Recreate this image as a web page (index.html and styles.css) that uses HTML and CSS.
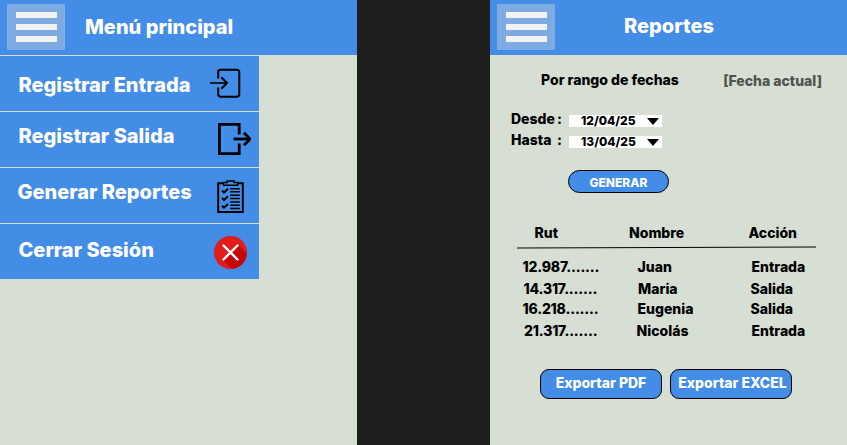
FILE: index.html
```html
<!DOCTYPE html>
<html lang="es">
<head>
<meta charset="utf-8">
<title>Control de accesos</title>
<link rel="stylesheet" href="styles.css">
</head>
<body>
<main class="board">
  <section class="screen">
    <header class="topbar">
      <button class="burger" aria-label="Menú"><span></span><span></span><span></span></button>
      <h1 class="title title-menu">Menú principal</h1>
    </header>
    <nav class="menu">
      <a class="item entrada"><span>Registrar Entrada</span>
        <svg width="32" height="32" viewBox="0 0 32 32" fill="none" stroke="#000" stroke-width="2"><path d="M8.200 10.500V4a2.300 2.300 0 0 1 2.300-2.300H27A2.300 2.300 0 0 1 29.300 4v22.400A2.300 2.300 0 0 1 27 28.700H10.500A2.300 2.300 0 0 1 8.200 26.400V19.500"/><path d="M0 15h17" stroke-width="1.600"/><path d="M11.300 9.300L17 15l-5.700 5.700"/></svg>
      </a>
      <a class="item salida"><span>Registrar Salida</span>
        <svg width="34" height="34" viewBox="0 0 34 34" fill="none" stroke="#000" stroke-width="2.800"><path d="M22.200 12.500V2.400H2.400v29.200h19.800V21.500"/><path d="M16.500 17H33"/><path d="M27 10.800L33 17l-6 6.200"/></svg>
      </a>
      <a class="item reportes"><span>Generar Reportes</span>
        <svg width="27" height="34" viewBox="0 0 27 34" fill="none" stroke="#000" stroke-width="2"><path d="M6.500 3.200H1.200v28.900h24.600V3.200h-5.300"/><path d="M6.500 5.300V2.500h3.700V1h6.800v1.500h3.700v2.800z" stroke-width="1.400"/><path d="M13.200 8.700h9.600M13.200 11.800h9.600M13.200 15.300h9.600M13.200 18.500h9.600M13.200 22h9.600M13.200 25.200h9.600M13.200 28.400h9.600" stroke-width="1.500"/><path d="M5 10.500l2 2 4-3.800M5 18l2 2 4-3.800M5 25.700l2 2 4-3.800"/></svg>
      </a>
      <a class="item sesion"><span>Cerrar Sesión</span>
        <svg width="34" height="34" viewBox="0 0 34 34"><defs><clipPath id="disc"><circle cx="17.500" cy="17.500" r="16.500"/></clipPath></defs><circle cx="17.500" cy="17.500" r="16.500" fill="#e21b1b"/><path d="M24.500 9.500L38 23 24 39 9.500 24.500z" fill="#c40808" clip-path="url(#disc)"/><path d="M10.500 10.500l14 14M24.500 10.500L10.500 24.500" stroke="#fff" stroke-width="2.400" stroke-linecap="round"/></svg>
      </a>
    </nav>
  </section>
  <section class="screen">
    <header class="topbar">
      <button class="burger" aria-label="Menú"><span></span><span></span><span></span></button>
      <h1 class="title title-reports">Reportes</h1>
    </header>
    <div class="heading"><h2>Por rango de fechas</h2><span class="today">[Fecha actual]</span></div>
    <div class="filters">
      <div class="filter"><span class="label">Desde</span><span class="colon">:</span><span class="date"><span>12/04/25</span><svg width="12" height="7" viewBox="0 0 12 7"><path d="M0 0h12L6 7z"/></svg></span></div>
      <div class="filter"><span class="label">Hasta</span><span class="colon">:</span><span class="date"><span>13/04/25</span><svg width="12" height="7" viewBox="0 0 12 7"><path d="M0 0h12L6 7z"/></svg></span></div>
    </div>
    <button class="generate">GENERAR</button>
    <div class="row head"><span>Rut</span><span>Nombre</span><span>Acción</span></div>
    <svg class="rule" width="300" height="3" viewBox="0 0 300 3"><path d="M0 2L299 1" stroke="#000"/></svg>
    <div class="rows">
      <div class="row r1"><span>12.987.......</span><span>Juan</span><span>Entrada</span></div>
      <div class="row r2"><span>14.317.......</span><span>Maria</span><span>Salida</span></div>
      <div class="row r3"><span>16.218.......</span><span>Eugenia</span><span>Salida</span></div>
      <div class="row r4"><span>21.317.......</span><span>Nicolás</span><span>Entrada</span></div>
    </div>
    <div class="exports"><button>Exportar PDF</button><button>Exportar EXCEL</button></div>
  </section>
</main>
</body>
</html>
```
FILE: styles.css
```css
* { box-sizing: border-box; }
body { margin: 0; background: #1e1e1e; font: 760 14px/17px Inter, sans-serif; font-optical-sizing: none; color: #000; }
h1, h2 { margin: 0; font: inherit; font-optical-sizing: none; }
button { font: inherit; font-optical-sizing: none; color: #fff; border: 0; padding: 0; }
svg { display: block; flex: none; }
.board { display: flex; justify-content: space-between; width: 847px; height: 445px; overflow: hidden; }
.screen { width: 357px; height: 445px; background: #d7ded3; }
.topbar { display: flex; height: 55px; padding: 4px 0 0 7px; background: #438de7; }
.burger { display: flex; flex-direction: column; gap: 6px; width: 58px; height: 46px; padding: 8px 8px 0 9px; background: #7fabe3; }
.burger span { height: 6px; background: #f2f2f2; }
.title { font-size: 20px; line-height: 24px; color: #fff; white-space: nowrap; }
.title-menu { margin: 11px 0 0 20px; }
.title-reports { margin: 10px 0 0 69px; }
.menu { width: 259px; }
.item { display: flex; justify-content: space-between; align-items: flex-start; height: 56px; padding-left: 18.500px; border-top: 1px solid #d7ded3; background: #438de7; color: #fff; font-size: 20px; line-height: 24px; }
.entrada { padding-top: 12px; padding-right: 17px; }
.entrada span { margin-top: 5px; }
.salida { padding-top: 10px; padding-right: 8px; }
.salida span { margin-top: 2px; }
.reportes { padding: 12px 15px 0 17.500px; }
.reportes span { margin-top: 0; }
.sesion { padding-top: 11px; padding-right: 12px; }
.sesion span { margin-top: 3px; }
.heading { display: flex; justify-content: space-between; padding: 16px 25px 0 51px; }
.today { margin-top: 1px; color: #50534e; }
.filters { display: grid; gap: 4px; padding: 21px 0 0 21px; }
.filter { display: flex; height: 17px; }
.label { width: 46px; }
.colon { width: 12px; }
.date { display: flex; justify-content: space-between; width: 93px; height: 12px; margin-top: 5px; padding: 0 3px 0 12px; background: #fff; font-size: 12px; line-height: 12px; }
.date svg { margin-top: 3px; }
.generate { display: block; width: 101px; height: 23px; margin: 22px 0 0 78px; padding-top: 2px; border: 1px solid #000; border-radius: 12px; background: #438de7; font-size: 12px; line-height: 17px; }
.row { display: grid; grid-template-columns: 115px 114px 80px; height: 17px; padding-left: 32.500px; }
.row:not(.head) span:first-child { letter-spacing: -0.2px; }
.head { grid-template-columns: 94.500px 119.500px 80px; margin-top: 31px; padding-left: 44.500px; }
.rule { margin: 5px 0 0 27px; }
.rows { padding-top: 9px; }
.r2 { margin-top: 5px; padding-left: 33.500px; grid-template-columns: 114.500px 112.500px 80px; }
.r3 { margin-top: 3px; grid-template-columns: 115px 113px 80px; }
.r4 { margin-top: 5px; padding-left: 34px; grid-template-columns: 112.500px 115px 80px; }
.exports { display: flex; gap: 8px; margin: 30px 0 0 50px; }
.exports button { width: 122px; height: 30px; border: 1px solid #000; border-radius: 9px; background: #438de7; padding-bottom: 3px; white-space: nowrap; }
.exports button:last-child { padding-left: 3px; }
```
